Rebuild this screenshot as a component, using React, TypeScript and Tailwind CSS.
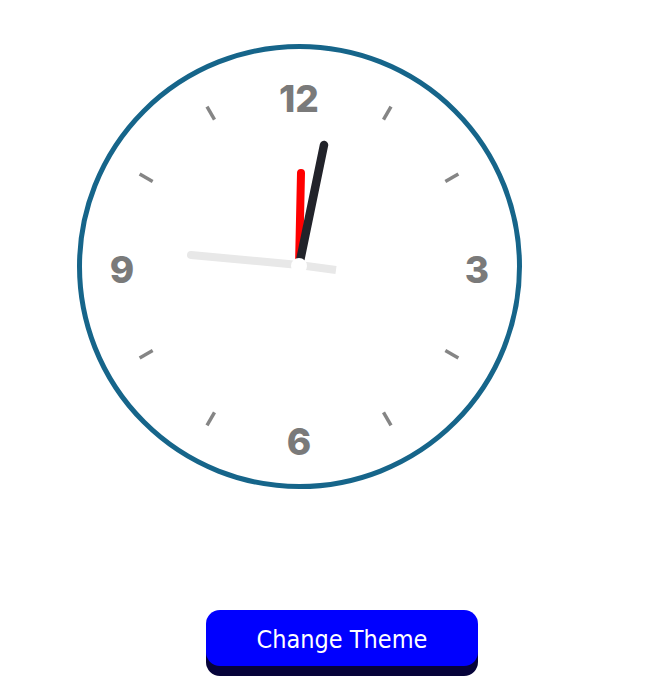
import React from "react";

const ticks = [30, 60, 120, 150, 210, 240, 300, 330];

const numbers = [
  { label: "12", x: 218, y: 50 },
  { label: "3", x: 396, y: 221 },
  { label: "6", x: 218, y: 393 },
  { label: "9", x: 41, y: 221 },
];

const Clock = () => {
  const c = 218;
  return (
    <div className="ml-[77px] h-[445px] w-[445px] rounded-full border-[5px] border-[#16658a] bg-white">
      <svg width="435" height="435" viewBox="0 0 435 435" className="block -translate-x-px -translate-y-px">
        {ticks.map((deg) => {
          const rad = (deg * Math.PI) / 180;
          const x1 = c + Math.sin(rad) * 169;
          const y1 = c - Math.cos(rad) * 169;
          const x2 = c + Math.sin(rad) * 184;
          const y2 = c - Math.cos(rad) * 184;
          return (
            <line
              key={deg}
              x1={x1}
              y1={y1}
              x2={x2}
              y2={y2}
              stroke="#858585"
              strokeWidth="3.5"
            />
          );
        })}
        {numbers.map((n) => (
          <text
            key={n.label}
            x={n.x}
            y={n.y}
            textAnchor="middle"
            dominantBaseline="central"
            fill="#7a7a7a"
            fontFamily="Inter, 'Open Sans', sans-serif"
            fontWeight="800"
            fontSize="37"
          >
            {n.label}
          </text>
        ))}
        {/* hour */}
        <line x1={c} y1={c} x2="220" y2="125" stroke="#ff0000" strokeWidth="8" strokeLinecap="round" />
        {/* minute */}
        <line x1={c} y1={c} x2="243" y2="97" stroke="#22232a" strokeWidth="8.5" strokeLinecap="round" />
        {/* second */}
        <line x1="110" y1="207" x2={c} y2={c - 1} stroke="#e8e8e8" strokeWidth="8" strokeLinecap="round" />
        <line x1={c} y1={c - 1} x2="255" y2="222" stroke="#e8e8e8" strokeWidth="8" />
        <circle cx={c} cy={c} r="8" fill="#ffffff" />
      </svg>
    </div>
  );
};

export default function App() {
  return (
    <div className="flex min-h-[688px] w-full flex-col bg-white pt-[44px]">
      <Clock />
      <button
        className="ml-[206px] mt-[121px] h-[56px] w-[272px] rounded-[14px] bg-[#0000ff] pt-1 text-[25px] text-white shadow-[0_10px_0_#06033a] font-stretch-condensed"
        style={{ fontFamily: "'DejaVu Sans Condensed', 'DejaVu Sans', sans-serif" }}
      >
        Change Theme
      </button>
    </div>
  );
}
